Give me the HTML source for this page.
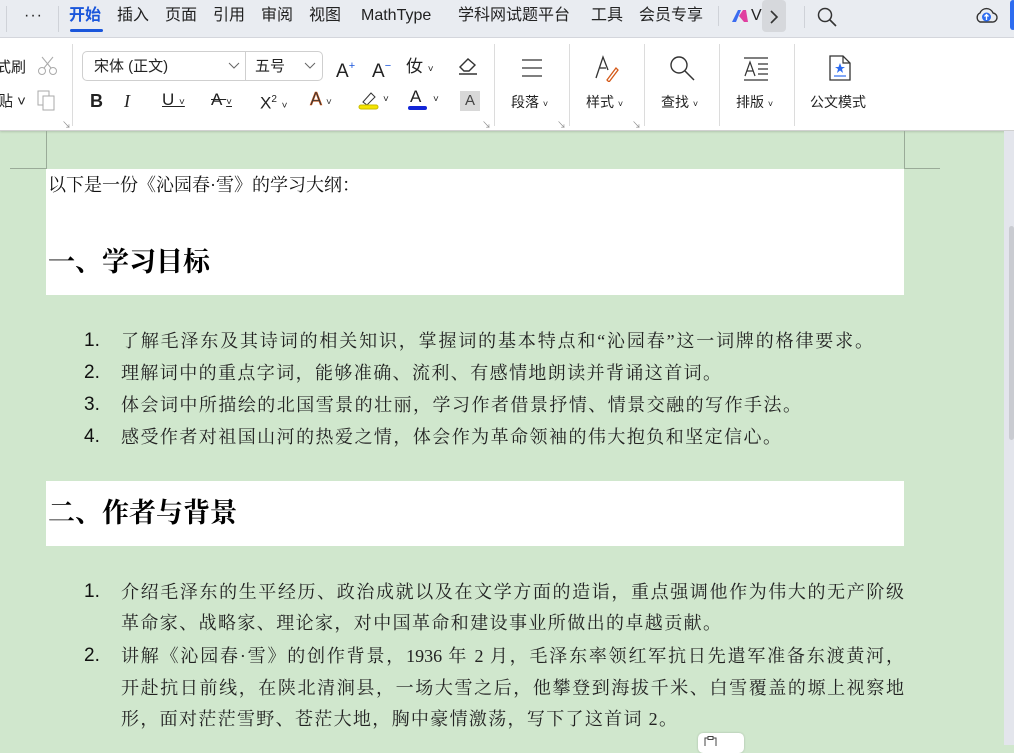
<!DOCTYPE html>
<html><head><meta charset="utf-8"><style>
*{margin:0;padding:0;box-sizing:border-box}
body{width:1014px;height:745px;overflow:hidden;position:relative;background:#d0e7cd;font-family:"Liberation Sans","Noto Sans CJK SC",sans-serif;color:#222}
.a{position:absolute;white-space:nowrap}
#top{position:absolute;left:0;top:0;width:1014px;height:38px;background:#e9ecf1;border-bottom:1px solid #d6d9de}
#rib{position:absolute;left:0;top:38px;width:1014px;height:93px;background:#fff;border-bottom:1px solid #d0d0d0;box-shadow:0 1px 2px rgba(0,0,0,.15)}
.tab{font-size:16px;top:4px;line-height:24px;height:24px;color:#222}
.sep{position:absolute;width:1px;background:#dcdcdc}
.rl{font-size:14px;color:#222;line-height:18px}
.ic{position:absolute}
.doc{font-family:"Liberation Serif","Noto Serif CJK SC",serif;color:#111}
.line{position:absolute;left:121px;width:783px;font-size:18px;text-align:justify;text-align-last:justify;font-family:"Liberation Serif","Noto Serif CJK SC",serif;color:#222;white-space:nowrap;line-height:24px}
.num{position:absolute;left:84px;font-size:19px;color:#111;line-height:24px}
.h{position:absolute;left:48px;font-size:27px;line-height:36px;font-weight:bold;font-family:"Liberation Serif","Noto Serif CJK SC",serif;color:#000}
</style></head><body>
<div id="top"></div>
<div class="sep" style="left:6px;top:6px;height:26px;background:#cfd2d8"></div>
<div class="a tab" style="left:24px;top:4px;font-size:16px;letter-spacing:1px">···</div>
<div class="sep" style="left:58px;top:6px;height:26px;background:#cfd2d8"></div>
<div class="a tab" style="left:69px;font-weight:bold;color:#1a56db">开始</div>
<div style="position:absolute;left:70px;top:29px;width:33px;height:3px;background:#1a56db;border-radius:2px"></div>
<div class="a tab" style="left:117px">插入</div>
<div class="a tab" style="left:165px">页面</div>
<div class="a tab" style="left:213px">引用</div>
<div class="a tab" style="left:261px">审阅</div>
<div class="a tab" style="left:309px">视图</div>
<div class="a tab" style="left:361px">MathType</div>
<div class="a tab" style="left:458px">学科网试题平台</div>
<div class="a tab" style="left:591px">工具</div>
<div class="a tab" style="left:639px">会员专享</div>
<div class="sep" style="left:718px;top:6px;height:20px;background:#cfd2d8"></div>
<svg class="ic" style="left:730px;top:8px" width="20" height="16"><path d="M2 14 L8 2 L11 2 L6 14Z" fill="#3b6cf0"/><path d="M9 8 L13 2 L16 2 L18 14 L14 14Z" fill="#e040a0"/></svg>
<div class="a tab" style="left:751px;color:#222">V</div>
<div style="position:absolute;left:762px;top:0;width:24px;height:32px;background:#d6d8dc;border-radius:4px"></div>
<svg class="ic" style="left:768px;top:9px" width="12" height="16"><path d="M3 2 L9 8 L3 14" stroke="#333" stroke-width="1.6" fill="none"/></svg>
<div class="sep" style="left:804px;top:6px;height:22px;background:#cfd2d8"></div>
<svg class="ic" style="left:816px;top:6px" width="22" height="22"><circle cx="9" cy="9" r="6.5" stroke="#333" stroke-width="1.5" fill="none"/><path d="M14 14 L20 20" stroke="#333" stroke-width="1.6"/></svg>
<svg class="ic" style="left:974px;top:5px" width="24" height="22"><path d="M6 17 A5 5 0 0 1 6 8 A7 7 0 0 1 19 8 A4.5 4.5 0 0 1 18 17Z" stroke="#333" stroke-width="1.4" fill="none"/><circle cx="12.5" cy="12" r="4.5" fill="#2d6cf0"/><path d="M12.5 15 V9.5 M10.5 11.5 L12.5 9.5 L14.5 11.5" stroke="#fff" stroke-width="1.3" fill="none"/></svg>
<div style="position:absolute;left:1010px;top:0;width:6px;height:30px;background:#2d6cf0;border-radius:3px"></div>

<div id="rib"></div>
<div class="a rl" style="left:-4px;top:59px;font-size:15px">式刷</div>
<div class="a rl" style="left:-2px;top:93px;font-size:15px">贴 ˅</div>
<svg class="ic" style="left:36px;top:55px" width="24" height="22"><circle cx="6" cy="16" r="3.5" stroke="#aaa" fill="none"/><circle cx="17" cy="16" r="3.5" stroke="#aaa" fill="none"/><path d="M8 13 L17 2 M15 13 L6 2" stroke="#aaa"/></svg>
<svg class="ic" style="left:37px;top:90px" width="22" height="22"><rect x="1" y="1" width="11" height="14" stroke="#aaa" fill="none"/><rect x="6" y="6" width="11" height="14" stroke="#aaa" fill="#fff"/></svg>
<div class="a" style="left:62px;top:118px;font-size:9px;color:#888">↘</div>
<div class="sep" style="left:72px;top:44px;height:82px"></div>
<div style="position:absolute;left:82px;top:51px;width:241px;height:30px;border:1px solid #cfcfcf;border-radius:5px"></div>
<div class="sep" style="left:245px;top:52px;height:28px;background:#cfcfcf"></div>
<div class="a" style="left:94px;top:57px;font-size:15px;line-height:20px">宋体 (正文)</div>
<svg class="ic" style="left:228px;top:61px" width="12" height="10"><path d="M1 2 L6 7 L11 2" stroke="#666" fill="none"/></svg>
<div class="a" style="left:255px;top:57px;font-size:15px;line-height:20px">五号</div>
<svg class="ic" style="left:304px;top:61px" width="12" height="10"><path d="M1 2 L6 7 L11 2" stroke="#666" fill="none"/></svg>
<div class="a" style="left:336px;top:55px;font-size:19px;line-height:22px">A<sup style="font-size:11px;color:#1a56db;vertical-align:8px">+</sup></div>
<div class="a" style="left:372px;top:55px;font-size:19px;line-height:22px">A<sup style="font-size:11px;color:#1a56db;vertical-align:8px">−</sup></div>
<div class="a" style="left:406px;top:56px;font-size:17px;line-height:22px">㚢 <span style="font-size:10px">˅</span></div>
<svg class="ic" style="left:457px;top:55px" width="22" height="20"><path d="M3 12 L11 4 L18 10 L12 16 L7 16Z" stroke="#333" stroke-width="1.4" fill="none"/><path d="M2 19 H20" stroke="#333" stroke-width="1.4"/></svg>
<div class="a" style="left:90px;top:90px;font-size:18px;font-weight:bold;line-height:22px">B</div>
<div class="a" style="left:124px;top:90px;font-size:18px;font-style:italic;font-family:'Liberation Serif',serif;line-height:22px">I</div>
<div class="a" style="left:162px;top:89px;font-size:17px;text-decoration:underline;line-height:22px">U <span style="font-size:10px;text-decoration:none">˅</span></div>
<div class="a" style="left:211px;top:89px;font-size:17px;text-decoration:line-through;line-height:22px">A <span style="font-size:10px">˅</span></div>
<div class="a" style="left:260px;top:89px;font-size:17px;line-height:22px">X<sup style="font-size:10px">2</sup> <span style="font-size:10px">˅</span></div>
<div class="a" style="left:310px;top:88px;font-size:18px;line-height:22px;color:#333;-webkit-text-stroke:0.5px #d45a1a">A <span style="font-size:10px;-webkit-text-stroke:0">˅</span></div>
<svg class="ic" style="left:358px;top:89px" width="22" height="22"><path d="M5 13 L13 4 L17 8 L9 16Z" stroke="#333" fill="none"/><rect x="1" y="16" width="19" height="4" rx="2" fill="#f5e400" stroke="#c9bb00"/></svg>
<div class="a" style="left:383px;top:94px;font-size:10px">˅</div>
<div class="a" style="left:410px;top:87px;font-size:17px;line-height:20px">A</div>
<div style="position:absolute;left:408px;top:106px;width:19px;height:4px;background:#1225d8;border-radius:2px"></div>
<div class="a" style="left:433px;top:94px;font-size:10px">˅</div>
<div style="position:absolute;left:460px;top:91px;width:20px;height:20px;background:#d8d8d8;font-size:15px;text-align:center;line-height:20px;color:#444">A</div>
<div class="a" style="left:482px;top:118px;font-size:9px;color:#888">↘</div>
<div class="sep" style="left:494px;top:44px;height:82px"></div>
<svg class="ic" style="left:521px;top:58px" width="22" height="20"><path d="M1 2 H21 M1 10 H21 M1 18 H21" stroke="#333" stroke-width="1.3"/></svg>
<div class="a rl" style="left:511px;top:93px">段落 <span style="font-size:9px">˅</span></div>
<div class="a" style="left:557px;top:118px;font-size:9px;color:#888">↘</div>
<div class="sep" style="left:569px;top:44px;height:82px"></div>
<svg class="ic" style="left:594px;top:54px" width="26" height="28"><path d="M2 24 L9 3 L14 16" stroke="#333" stroke-width="1.3" fill="none"/><path d="M6 14 H12" stroke="#333" stroke-width="1.3"/><path d="M13 26 L22 14 L24 16 L15 28Z" stroke="#d45a1a" stroke-width="1.3" fill="none"/></svg>
<div class="a rl" style="left:586px;top:93px">样式 <span style="font-size:9px">˅</span></div>
<div class="a" style="left:632px;top:118px;font-size:9px;color:#888">↘</div>
<div class="sep" style="left:644px;top:44px;height:82px"></div>
<svg class="ic" style="left:668px;top:55px" width="28" height="28"><circle cx="11" cy="10" r="8" stroke="#333" stroke-width="1.4" fill="none"/><path d="M17 16 L26 25" stroke="#333" stroke-width="1.5"/></svg>
<div class="a rl" style="left:661px;top:93px">查找 <span style="font-size:9px">˅</span></div>
<div class="sep" style="left:719px;top:44px;height:82px"></div>
<svg class="ic" style="left:743px;top:57px" width="26" height="24"><path d="M1 1 H25 M1 23 H25 M15 7 H25 M15 12 H25 M15 17 H25" stroke="#333" stroke-width="1.2"/><path d="M2 19 L7 5 L12 19 M4 14 H10" stroke="#333" stroke-width="1.2" fill="none"/></svg>
<div class="a rl" style="left:736px;top:93px">排版 <span style="font-size:9px">˅</span></div>
<div class="sep" style="left:794px;top:44px;height:82px"></div>
<svg class="ic" style="left:828px;top:55px" width="24" height="28"><path d="M2 1 H15 L22 8 V25 H2Z" stroke="#333" stroke-width="1.3" fill="none"/><path d="M15 1 V8 H22" stroke="#333" stroke-width="1.2" fill="none"/><path d="M12 8 L13.5 12 L17 12 L14 14 L15 18 L12 15.5 L9 18 L10 14 L7 12 L10.5 12Z" fill="#2d6cf0"/><path d="M6 21 H18" stroke="#2d6cf0" stroke-width="1.2"/></svg>
<div class="a rl" style="left:810px;top:93px">公文模式</div>

<div style="position:absolute;left:46px;top:131px;width:1px;height:37px;background:#9aab98"></div>
<div style="position:absolute;left:10px;top:168px;width:37px;height:1px;background:#9aab98"></div>
<div style="position:absolute;left:904px;top:131px;width:1px;height:37px;background:#9aab98"></div>
<div style="position:absolute;left:904px;top:168px;width:36px;height:1px;background:#9aab98"></div>
<div style="position:absolute;left:1004px;top:131px;width:10px;height:614px;background:#e3e5ec"></div>
<div style="position:absolute;left:1009px;top:226px;width:5px;height:214px;background:#c9cbd1;border-radius:3px"></div>

<div style="position:absolute;left:46px;top:169px;width:858px;height:126px;background:#fff"></div>
<div style="position:absolute;left:46px;top:481px;width:858px;height:65px;background:#fff"></div>

<div class="a doc" style="left:48px;top:173px;font-size:18px;line-height:24px">以下是一份《沁园春·雪》的学习大纲：</div>
<div class="a h" style="top:244px">一、学习目标</div>

<div class="num" style="top:329px">1.</div><div class="line" style="top:329px;width:752px">了解毛泽东及其诗词的相关知识，掌握词的基本特点和“沁园春”这一词牌的格律要求。</div>
<div class="num" style="top:361px">2.</div><div class="line" style="top:361px;width:600px">理解词中的重点字词，能够准确、流利、有感情地朗读并背诵这首词。</div>
<div class="num" style="top:393px">3.</div><div class="line" style="top:393px;width:680px">体会词中所描绘的北国雪景的壮丽，学习作者借景抒情、情景交融的写作手法。</div>
<div class="num" style="top:425px">4.</div><div class="line" style="top:425px;width:660px">感受作者对祖国山河的热爱之情，体会作为革命领袖的伟大抱负和坚定信心。</div>

<div class="a h" style="top:495px">二、作者与背景</div>

<div class="num" style="top:580px">1.</div><div class="line" style="top:580px">介绍毛泽东的生平经历、政治成就以及在文学方面的造诣，重点强调他作为伟大的无产阶级</div>
<div class="line" style="top:611px;width:600px">革命家、战略家、理论家，对中国革命和建设事业所做出的卓越贡献。</div>
<div class="num" style="top:644px">2.</div><div class="line" style="top:644px">讲解《沁园春·雪》的创作背景，1936 年 2 月，毛泽东率领红军抗日先遣军准备东渡黄河，</div>
<div class="line" style="top:676px">开赴抗日前线，在陕北清涧县，一场大雪之后，他攀登到海拔千米、白雪覆盖的塬上视察地</div>
<div class="line" style="top:707px;width:556px">形，面对茫茫雪野、苍茫大地，胸中豪情激荡，写下了这首词 2。</div>

<div style="position:absolute;left:698px;top:733px;width:46px;height:20px;background:#fff;border-radius:5px;box-shadow:0 0 2px rgba(0,0,0,.2)"></div>
<svg class="ic" style="left:704px;top:736px" width="14" height="10"><rect x="1" y="2" width="11" height="10" stroke="#444" fill="none"/><rect x="4" y="0.5" width="5" height="3" stroke="#444" fill="#fff"/></svg>
</body></html>
